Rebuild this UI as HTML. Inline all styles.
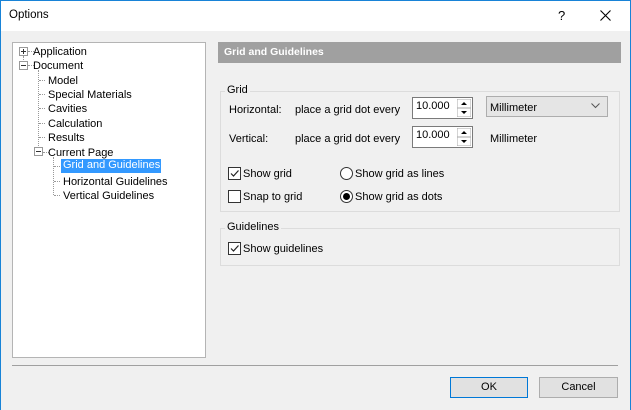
<!DOCTYPE html>
<html><head><style>
*{margin:0;padding:0;box-sizing:border-box}
body{width:631px;height:410px;background:#f0f0f0;font-family:"Liberation Sans",sans-serif;font-size:11px;color:#000;position:relative;overflow:hidden}
.a{position:absolute;white-space:nowrap}
.t{position:absolute;white-space:nowrap;margin-top:2px}
.win{position:absolute;left:0;top:0;width:631px;height:410px;border:1px solid #1883d7;border-bottom:none}
.title{position:absolute;left:1px;top:1px;width:629px;height:30px;background:#fff}
.tree{position:absolute;left:12px;top:42px;width:194px;height:316px;background:#fff;border:1px solid #b4b4b4}
.box{position:absolute;width:9px;height:9px;border:1px solid #999;background:#fff}
.box:before{content:"";position:absolute;left:1px;top:3px;width:5px;height:1px;background:#333}
.plus:after{content:"";position:absolute;left:3px;top:1px;width:1px;height:5px;background:#333}
.dv{position:absolute;border-left:1px dotted #999}
.dh{position:absolute;border-top:1px dotted #999;width:6px}
.grp{position:absolute;border:1px solid #dcdcdc}
.lbl{background:#f0f0f0;padding:0 2px}
.inp{position:absolute;background:#fff;border:1px solid #7a7a7a;height:22px;width:61px}
.spin{position:absolute;right:1px;top:1px;width:14px;height:18px}
.cb{position:absolute;width:13px;height:13px;border:1px solid #333;background:#fff}
.rb{position:absolute;width:13px;height:13px;border:1px solid #333;border-radius:50%;background:#fff}
.btn{position:absolute;height:21px;background:#e1e1e1;border:1px solid #adadad;text-align:center;line-height:19px}
</style></head><body>
<div class="win"></div>
<div class="title"></div>
<div class="a" style="left:9px;top:9px;font-size:11.5px">Options</div>
<div class="a" style="left:558px;top:8px;font-size:13px">?</div>
<svg class="a" style="left:600px;top:10px" width="11" height="11"><path d="M0.5 0.5L10.5 10.5M10.5 0.5L0.5 10.5" stroke="#000" stroke-width="1.1"/></svg>

<div class="tree"></div>
<div class="dv" style="left:23px;top:56px;height:10px"></div>
<div class="box plus" style="left:19px;top:47px"></div>
<div class="dh" style="left:28px;top:51px"></div>
<div class="t" style="left:33px;top:44px">Application</div>
<div class="box" style="left:19px;top:61px"></div>
<div class="dh" style="left:28px;top:65px"></div>
<div class="t" style="left:33px;top:58px">Document</div>
<div class="dv" style="left:38px;top:70px;height:82px"></div>
<div class="dh" style="left:39px;top:80px"></div><div class="t" style="left:48px;top:73px">Model</div>
<div class="dh" style="left:39px;top:94px"></div><div class="t" style="left:48px;top:87px">Special Materials</div>
<div class="dh" style="left:39px;top:108px"></div><div class="t" style="left:48px;top:101px">Cavities</div>
<div class="dh" style="left:39px;top:123px"></div><div class="t" style="left:48px;top:116px">Calculation</div>
<div class="dh" style="left:39px;top:137px"></div><div class="t" style="left:48px;top:130px">Results</div>
<div class="box" style="left:34px;top:147px"></div>
<div class="dh" style="left:43px;top:152px"></div><div class="t" style="left:48px;top:145px">Current Page</div>
<div class="dv" style="left:53px;top:157px;height:38px"></div>
<div class="dh" style="left:54px;top:166px"></div>
<div class="a" style="left:61px;top:159px;width:100px;height:14px;background:#3399ff"></div>
<div class="a" style="left:63px;top:159px;color:#fff">Grid and Guidelines</div>
<div class="dh" style="left:54px;top:181px"></div><div class="t" style="left:63px;top:174px">Horizontal Guidelines</div>
<div class="dh" style="left:54px;top:195px"></div><div class="t" style="left:63px;top:188px">Vertical Guidelines</div>

<div class="a" style="left:218px;top:42px;width:403px;height:21px;background:#a0a0a0"></div>
<div class="a" style="left:224px;top:46px;color:#fff;font-weight:bold;font-size:10.5px">Grid and Guidelines</div>

<div class="grp" style="left:220px;top:91px;width:400px;height:121px"></div>
<div class="t lbl" style="left:225px;top:82px">Grid</div>
<div class="t" style="left:229px;top:102px">Horizontal:</div>
<div class="t" style="left:295px;top:102px">place a grid dot every</div>
<div class="inp" style="left:412px;top:97px"><span class="a" style="left:3px;top:2px">10.000</span>
<svg class="spin" viewBox="0 0 14 18"><rect x="0" y="0" width="14" height="9" fill="#fff" stroke="#aaa"/><rect x="0" y="9" width="14" height="9" fill="#fff" stroke="#aaa"/><path d="M4 6L7 3L10 6Z M4 12L7 15L10 12Z" fill="#000"/></svg></div>
<div class="a" style="left:486px;top:96px;width:122px;height:21px;background:#e5e5e5;border:1px solid #adadad"></div>
<div class="t" style="left:490px;top:100px">Millimeter</div>
<svg class="a" style="left:591px;top:103px" width="9" height="6"><path d="M0.5 0.5L4.5 4.5L8.5 0.5" stroke="#555" fill="none"/></svg>
<div class="t" style="left:229px;top:131px">Vertical:</div>
<div class="t" style="left:295px;top:131px">place a grid dot every</div>
<div class="inp" style="left:412px;top:126px"><span class="a" style="left:3px;top:2px">10.000</span>
<svg class="spin" viewBox="0 0 14 18"><rect x="0" y="0" width="14" height="9" fill="#fff" stroke="#aaa"/><rect x="0" y="9" width="14" height="9" fill="#fff" stroke="#aaa"/><path d="M4 6L7 3L10 6Z M4 12L7 15L10 12Z" fill="#000"/></svg></div>
<div class="t" style="left:490px;top:131px">Millimeter</div>

<div class="cb" style="left:228px;top:167px"><svg width="11" height="11" style="position:absolute;left:0;top:0"><path d="M2 5.5L4.5 8L9.5 2.5" stroke="#222" fill="none" stroke-width="1.2"/></svg></div>
<div class="t" style="left:243px;top:166px">Show grid</div>
<div class="cb" style="left:228px;top:190px"></div>
<div class="t" style="left:243px;top:189px">Snap to grid</div>
<div class="rb" style="left:340px;top:167px"></div>
<div class="t" style="left:355px;top:166px">Show grid as lines</div>
<div class="rb" style="left:340px;top:190px"><div style="position:absolute;left:2px;top:2px;width:7px;height:7px;border-radius:50%;background:#000"></div></div>
<div class="t" style="left:355px;top:189px">Show grid as dots</div>

<div class="grp" style="left:220px;top:228px;width:400px;height:38px"></div>
<div class="t lbl" style="left:225px;top:219px">Guidelines</div>
<div class="cb" style="left:228px;top:242px"><svg width="11" height="11" style="position:absolute;left:0;top:0"><path d="M2 5.5L4.5 8L9.5 2.5" stroke="#222" fill="none" stroke-width="1.2"/></svg></div>
<div class="t" style="left:243px;top:241px">Show guidelines</div>

<div class="a" style="left:12px;top:365px;width:606px;height:1px;background:#a0a0a0"></div>
<div class="btn" style="left:450px;top:377px;width:78px;border:1px solid #0078d7">OK</div>
<div class="btn" style="left:539px;top:377px;width:79px">Cancel</div>
</body></html>
